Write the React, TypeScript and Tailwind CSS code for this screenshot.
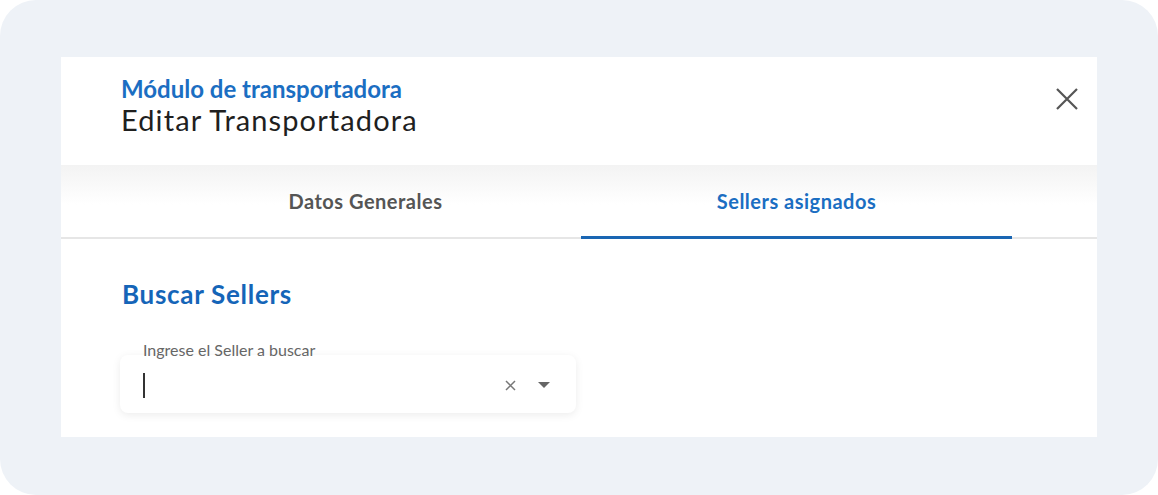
export default function App() {
  return (
    <div className="w-[1158px] h-[495px] bg-white" style={{ fontFamily: 'Lato, "Open Sans", sans-serif' }}>
      <div className="w-full h-full bg-[#eef2f7] rounded-[36px] pt-[57px] px-[61px]">
        <div className="bg-white h-[380px] flex flex-col">
          {/* header */}
          <div className="h-[108px] flex justify-between items-start pl-[60px] pr-[19px] pt-[18px]">
            <div>
              <div className="text-[24px] leading-[28px] font-bold text-[#1b6ec2]">Módulo de transportadora</div>
              <div className="mt-[2px] text-[29px] leading-[30px] tracking-[1.1px] text-[#1f1f1f]">Editar Transportadora</div>
            </div>
            <button className="mt-[13px] text-[#555]" aria-label="Cerrar">
              <svg width="22" height="22" viewBox="0 0 22 22">
                <path d="M1 1l20 20M21 1L1 21" stroke="currentColor" strokeWidth="2.2" />
              </svg>
            </button>
          </div>

          {/* tabs */}
          <div className="h-[74px] bg-gradient-to-b from-[#f3f3f3] to-white to-[55%] border-b-2 border-[#e6e6e6] flex pl-[89px]">
            <div className="w-[431px] flex items-center justify-center text-[20px] tracking-[0.5px] font-bold text-[#555]">Datos Generales</div>
            <div className="w-[431px] flex items-center justify-center text-[20px] tracking-[0.5px] font-bold text-[#1b6ec2] relative">
              Sellers asignados
              <span className="absolute left-0 right-0 -bottom-[2px] h-[3px] bg-[#1a66b3]" />
            </div>
          </div>

          {/* body */}
          <div className="pl-[61px] pt-[40px]">
            <h2 className="text-[26px] leading-[30px] tracking-[0.7px] font-bold text-[#1565b8]">Buscar Sellers</h2>
            <div className="relative mt-[46px] w-[456px] h-[58px] -ml-[2px] rounded-[8px] bg-white shadow-[0_2px_8px_rgba(0,0,0,0.08)] flex items-center pl-[23px] pr-[26px]">
              <span className="absolute left-[23px] -top-[14px] text-[16px] leading-[18px] text-[#666]">Ingrese el Seller a buscar</span>
              <span className="w-[1.5px] h-[25px] bg-[#333] mt-[2px]" />
              <div className="ml-auto flex items-center gap-[22px] mt-[2px]">
                <svg width="11" height="11" viewBox="0 0 11 11" className="text-[#777]">
                  <path d="M1 1l9 9M10 1l-9 9" stroke="currentColor" strokeWidth="1.5" />
                </svg>
                <svg width="12" height="7" viewBox="0 0 12 7" className="text-[#666]">
                  <path d="M0 0h12L6 6z" fill="currentColor" />
                </svg>
              </div>
            </div>
          </div>
        </div>
      </div>
    </div>
  );
}
